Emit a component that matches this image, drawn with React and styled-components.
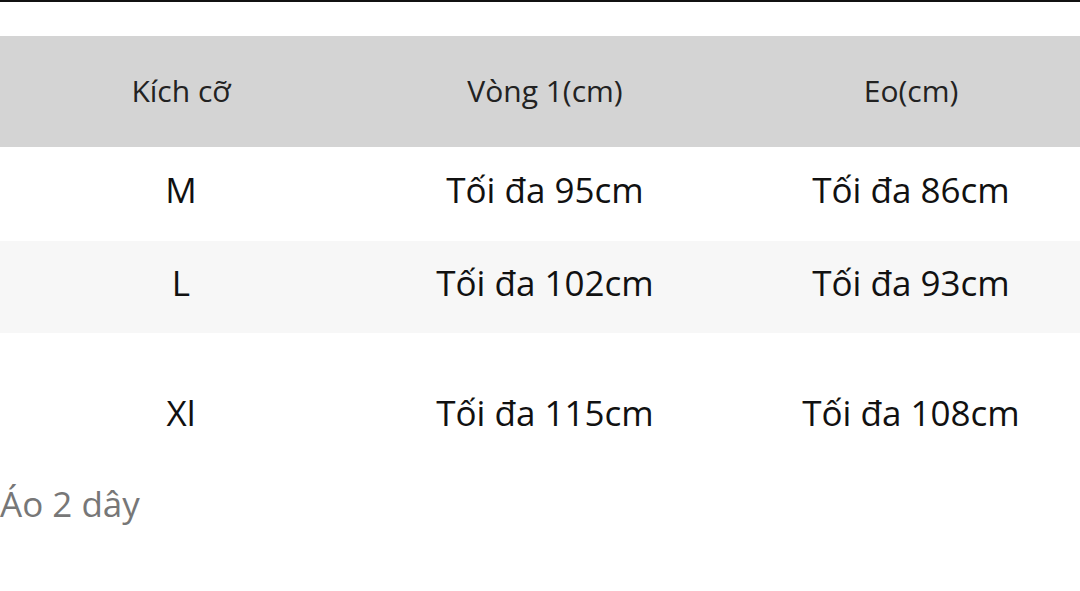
import React from 'react';
import styled, { createGlobalStyle } from 'styled-components';

const GlobalStyle = createGlobalStyle`
  html, body {
    margin: 0;
    padding: 0;
    background: #ffffff;
  }
  body {
    font-family: "Open Sans", "Noto Sans", sans-serif;
    width: 1080px;
    height: 591px;
    overflow: hidden;
  }
`;

const rows = [
    { size: 'M', bust: 'Tối đa 95cm', waist: 'Tối đa 86cm', height: 94, bg: '#ffffff' },
    { size: 'L', bust: 'Tối đa 102cm', waist: 'Tối đa 93cm', height: 92, bg: '#f7f7f7' },
    { size: 'Xl', bust: 'Tối đa 115cm', waist: 'Tối đa 108cm', height: 168, bg: '#ffffff' },
];

const App = () => {
    return (
        <Page>
            <GlobalStyle />
            <TopBar />
            <Table>
                <HeadRow>
                    <HeadCell>Kích cỡ</HeadCell>
                    <HeadCell>Vòng 1(cm)</HeadCell>
                    <HeadCell>Eo(cm)</HeadCell>
                </HeadRow>
                {rows.map(r => (
                    <Row key={r.size} bg={r.bg} h={r.height}>
                        <Cell>{r.size}</Cell>
                        <Cell>{r.bust}</Cell>
                        <Cell>{r.waist}</Cell>
                    </Row>
                ))}
            </Table>
            <Caption>Áo 2 dây</Caption>
        </Page>
    )
}

const Page = styled.div`
    width: 1080px;
    height: 591px;
    overflow: hidden;
    display: flex;
    flex-direction: column;
`;

const TopBar = styled.div`
    height: 2px;
    background: #111;
    margin-bottom: 34px;
`;

const Table = styled.div`
    width: 1094px;
    display: flex;
    flex-direction: column;
`;

const HeadRow = styled.div`
    display: grid;
    grid-template-columns: 362px 366px 366px;
    height: 111px;
    background: #d4d4d4;
    align-items: center;
`;

const HeadCell = styled.div`
    text-align: center;
    font-size: 30px;
    line-height: 40px;
    color: #222;
    padding-bottom: 2px;
`;

const Row = styled.div`
    display: grid;
    grid-template-columns: 362px 366px 366px;
    height: ${p => p.h}px;
    background: ${p => p.bg};
    align-items: center;
`;

const Cell = styled.div`
    text-align: center;
    font-size: 35px;
    line-height: 44px;
    color: #111;
    padding-bottom: 8px;
`;

const Caption = styled.div`
    margin-top: -19px;
    font-size: 35px;
    color: #777;
    line-height: 44px;
`;

export default App;
